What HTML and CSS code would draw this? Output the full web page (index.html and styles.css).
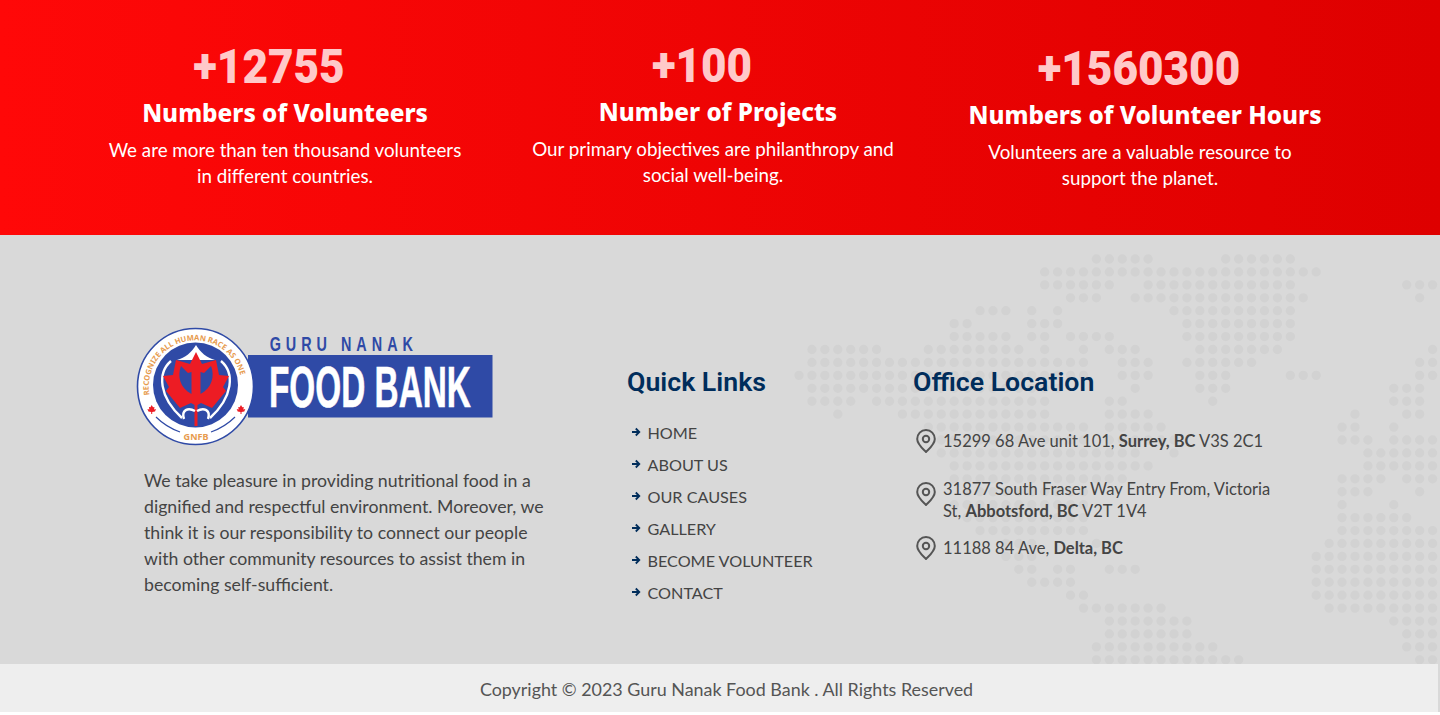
FILE: index.html
```html
<!DOCTYPE html>
<html lang="en">
<head>
  <meta charset="UTF-8" />
  <meta name="viewport" content="width=device-width, initial-scale=1.0"/>
  <title>Guru Nanak Food Bank</title>
  <link rel="stylesheet" href="styles.css">
</head>
<body>
  <!-- STATS -->
  <section class="stats">
    <div class="stat">
      <div class="stat-num">+12755</div>
      <h3>Numbers of Volunteers</h3>
      <p>We are more than ten thousand volunteers<br>in different countries.</p>
    </div>
    <div class="stat stat-mid">
      <div class="stat-num">+100</div>
      <h3>Number of Projects</h3>
      <p>Our primary objectives are philanthropy and<br>social well-being.</p>
    </div>
    <div class="stat stat-last">
      <div class="stat-num">+1560300</div>
      <h3>Numbers of Volunteer Hours</h3>
      <p>Volunteers are a valuable resource to<br>support the planet.</p>
    </div>
  </section>

  <!-- FOOTER -->
  <footer class="footer">
    <svg class="dots" viewBox="0 0 660 429" width="660" height="429" aria-hidden="true">
      <g transform="translate(19 24) scale(12.93)">
        <path d="M23 0h4.01M33 0h5.01M19 1h21.01M19 2h5.01M27 2h11.01M47 2h2.01M21 3h2.01M26 3h13.01M48 3h.01
          M14 4h2.01M18 4h.01M20 4h.01M29 4h9.01M12 5h1.01M18 5h2.01M30 5h8.01M12 6h4.01M18 6h1.01M21 6h3.01M30 6h8.01
          M1 7h5.01M10 7h7.01M19 7h.01M22 7h.01M24 7h2.01M31 7h6.01M49 7h.01M1 8h21.01M25 8h2.01M30 8h5.01M48 8h1.01
          M0 9h22.01M25 9h2.01M31 9h2.01M38 9h2.01M48 9h1.01M1 10h19.01M26 10h.01M31 10h2.01M46 10h2.01
          M1 11h3.01M6 11h13.01M24 11h1.01M32 11h.01M46 11h2.01M3 12h.01M8 12h11.01M24 12h3.01M43 12h.01M47 12h1.01
          M10 13h12.01M24 13h4.01M42 13h1.01M46 13h.01M11 14h11.01M24 14h5.01M42 14h2.01M46 14h3.01
          M11 15h15.01M29 15h.01M44 15h5.01M12 16h15.01M44 16h5.01M12 17h13.01M42 17h3.01M47 17h2.01
          M13 18h9.01M42 18h2.01M48 18h.01M12 19h10.01M42 19h.01M46 19h.01M13 20h9.01M42 20h5.01M14 21h8.01M42 21h7.01
          M16 22h2.01M23 22h.01M41 22h8.01M16 23h2.01M40 23h9.01M17 24h1.01M20 24h1.01M24 24h2.01M40 24h9.01
          M18 25h3.01M40 25h9.01M21 26h1.01M40 26h9.01M22 27h6.01M41 27h8.01M24 28h6.01M46 28h3.01
          M24 29h6.01M47 29h2.01M23 30h9.01M47 30h2.01M23 31h11.01M48 31h1.01"/>
      </g>
    </svg>

    <div class="footer-main">
      <div class="col-about">
        <svg class="logo" viewBox="0 0 360 124" width="360" height="124" role="img" aria-label="Guru Nanak Food Bank">
          <rect class="logo-bar" x="113" y="30" width="244.500" height="62.500"/>
          <text class="logo-guru" transform="scale(.72 1)" x="187" y="26" textLength="199" lengthAdjust="spacing">GURU NANAK</text>
          <text class="logo-food" transform="scale(.575 1)" x="233" y="82">FOOD BANK</text>

          <circle class="logo-ring" cx="60.500" cy="61.500" r="58"/>
          <circle class="logo-blue" cx="60.500" cy="60" r="42.500"/>
          <path class="logo-curve" d="M21 92Q31 102 45 107M100 92Q90 102 76 107"/>
          <!-- white peak and the two outer blades -->
          <path class="logo-white" d="M61 20C57 27 50 33 42 35L80 35C72 33 65 27 61 20Z"/>
          <path class="logo-blade" d="M36 36C22 48 24 72 47 93M86 36C100 48 98 72 75 93"/>
          <path class="logo-red" d="M61 27L67 39L81 35L84 50L94 51L88 62L91 66L77 83L66 78L62.500 80V101H59.500V80L56 78L45 83L31 66L34 62L28 51L38 50L41 35L55 39Z"/>
          <path class="logo-blue" d="M46 41C42 51 45 63 56.500 69V47L53 48ZM76 41C80 51 77 63 65.500 69V47L69 48Z"/>
          <path class="logo-blade" d="M60 86C53 82 46 85 49 94M62 86C69 82 76 85 73 94"/>

          <path id="logoArc" class="logo-none" d="M14.500 70A46.500 46.500 0 1 1 98 89"/>
          <text class="logo-motto"><textPath href="#logoArc">RECOGNIZE ALL HUMAN RACE AS ONE</textPath></text>
          <text class="logo-gnfb" x="61" y="114.500" text-anchor="middle">GNFB</text>
          <path class="logo-leaf" d="M16.700 80L18 82.300L19.500 82L19 84.500L21 84L20 86.500L17.200 87V89H16.200V87L13.400 86.500L12.400 84L14.400 84.500L13.900 82L15.400 82.300Z"/>
          <path class="logo-leaf" d="M106 80L107.300 82.300L108.800 82L108.300 84.500L110.300 84L109.300 86.500L106.500 87V89H105.500V87L102.700 86.500L101.700 84L103.700 84.500L103.200 82L104.700 82.300Z"/>
        </svg>
        <p class="about-text">We take pleasure in providing nutritional food in a<br>dignified and respectful environment. Moreover, we<br>think it is our responsibility to connect our people<br>with other community resources to assist them in<br>becoming self-sufficient.</p>
      </div>

      <div class="col-links">
        <h4>Quick Links</h4>
        <ul class="links">
          <li><svg viewBox="0 0 10 10" width="10" height="10"><path d="M1 5h7M4.800 1.500L8.300 5L4.800 8.500"/></svg><a href="#">HOME</a></li>
          <li><svg viewBox="0 0 10 10" width="10" height="10"><path d="M1 5h7M4.800 1.500L8.300 5L4.800 8.500"/></svg><a href="#">ABOUT US</a></li>
          <li><svg viewBox="0 0 10 10" width="10" height="10"><path d="M1 5h7M4.800 1.500L8.300 5L4.800 8.500"/></svg><a href="#">OUR CAUSES</a></li>
          <li><svg viewBox="0 0 10 10" width="10" height="10"><path d="M1 5h7M4.800 1.500L8.300 5L4.800 8.500"/></svg><a href="#">GALLERY</a></li>
          <li><svg viewBox="0 0 10 10" width="10" height="10"><path d="M1 5h7M4.800 1.500L8.300 5L4.800 8.500"/></svg><a href="#">BECOME VOLUNTEER</a></li>
          <li><svg viewBox="0 0 10 10" width="10" height="10"><path d="M1 5h7M4.800 1.500L8.300 5L4.800 8.500"/></svg><a href="#">CONTACT</a></li>
        </ul>
      </div>

      <div class="col-office">
        <h4>Office Location</h4>
        <div class="office">
          <div class="place">
            <svg viewBox="0 0 20 24" width="20" height="24"><path d="M10 1C5 1 1.200 5 1.200 10C1.200 15 6 19 10 23C14 19 18.800 15 18.800 10C18.800 5 15 1 10 1Z"/><circle cx="10" cy="10" r="3.200"/></svg>
            <span>15299 68 Ave unit 101, <b>Surrey, BC</b> V3S 2C1</span>
          </div>
          <div class="place place-two">
            <svg viewBox="0 0 20 24" width="20" height="24"><path d="M10 1C5 1 1.200 5 1.200 10C1.200 15 6 19 10 23C14 19 18.800 15 18.800 10C18.800 5 15 1 10 1Z"/><circle cx="10" cy="10" r="3.200"/></svg>
            <span>31877 South Fraser Way Entry From, Victoria<br>St, <b>Abbotsford, BC</b> V2T 1V4</span>
          </div>
          <div class="place">
            <svg viewBox="0 0 20 24" width="20" height="24"><path d="M10 1C5 1 1.200 5 1.200 10C1.200 15 6 19 10 23C14 19 18.800 15 18.800 10C18.800 5 15 1 10 1Z"/><circle cx="10" cy="10" r="3.200"/></svg>
            <span>11188 84 Ave, <b>Delta, BC</b></span>
          </div>
        </div>
      </div>
    </div>

    <div class="copyright">Copyright © 2023 Guru Nanak Food Bank . All Rights Reserved</div>
  </footer>
</body>
</html>
```

FILE: styles.css
```css
:root {
  --navy: #002d5b;
  --logo-blue: #2f4aa6;
  --logo-orange: #e79b4e;
  --logo-red: #ed1c24;
  --grey: #d9d9d9;
  --text: #444;
}

* {
  box-sizing: border-box;
}

body {
  margin: 0;
  background: #fff;
  font-family: "Lato", "Noto Sans", sans-serif;
  color: var(--text);
}

/* stats band */
.stats {
  height: 235px;
  display: grid;
  grid-template-columns: repeat(3, 390px);
  column-gap: 40px;
  padding: 0 100px 0 90px;
  background: linear-gradient(90deg, #ff0808, #de0000);
  color: #fff;
  text-align: center;
}

.stat {
  padding-top: 39px;
}

.stat-mid {
  padding-top: 38px;
}

.stat-last {
  padding-top: 41px;
}

.stat-num {
  margin-right: 32px;
  font-family: "Roboto", sans-serif;
  font-size: 49px;
  line-height: 56px;
  font-weight: 900;
  color: #ffc9c9;
  transform: scaleX(.9);
}

.stat-mid .stat-num {
  margin-right: 26px;
}

.stat-last .stat-num {
  margin-right: 12px;
}

.stat h3 {
  margin: 1px 0 0;
  font-family: "Noto Sans", sans-serif;
  font-size: 24.3px;
  line-height: 34px;
  font-weight: 800;
  white-space: nowrap;
}

.stat-mid h3 {
  margin-left: 6px;
}

.stat p {
  margin: 7px 0 0;
  font-size: 18.8px;
  line-height: 26px;
  white-space: nowrap;
}

.stat-mid p {
  margin-right: 4px;
}

.stat-last p {
  margin-right: 10px;
}

/* footer */
.footer {
  position: relative;
  background: var(--grey);
}

.footer::after {
  content: "";
  position: absolute;
  right: 0;
  top: 0;
  bottom: 12px;
  width: 2px;
  background: var(--grey);
}

.dots {
  position: absolute;
  top: 0;
  right: 0;
  overflow: hidden;
}

.dots path {
  fill: none;
  stroke: #d2d2d2;
  stroke-width: .72;
  stroke-linecap: round;
  stroke-dasharray: 0 1;
}

.footer-main {
  position: relative;
  height: 429px;
  display: flex;
  padding-left: 135px;
}

.col-about {
  width: 492px;
  padding-top: 90px;
}

.logo {
  display: block;
}

.logo-bar { fill: var(--logo-blue); }
.logo-guru {
  font: 700 20px "Liberation Sans", sans-serif;
  fill: var(--logo-blue);
}
.logo-food {
  font: 700 58px "Liberation Sans", sans-serif;
  fill: #fff;
  stroke: #fff;
  stroke-width: .6;
}
.logo-ring {
  fill: #fff;
  stroke: var(--logo-blue);
  stroke-width: 1.6;
}
.logo-blue { fill: var(--logo-blue); }
.logo-white { fill: #fff; }
.logo-red, .logo-leaf { fill: var(--logo-red); }
.logo-none { fill: none; }
.logo-curve {
  fill: none;
  stroke: var(--logo-blue);
  stroke-width: 1.2;
}
.logo-blade {
  fill: none;
  stroke: #fff;
  stroke-width: 2.4;
}
.logo-motto {
  font: 700 7.6px "Noto Sans", sans-serif;
  fill: var(--logo-orange);
}
.logo-gnfb {
  font: 700 9px "Noto Sans", sans-serif;
  fill: var(--logo-orange);
}

.about-text {
  margin: 19px 0 0 9px;
  font-size: 17.7px;
  line-height: 26px;
  white-space: nowrap;
}

.col-links {
  width: 286px;
}

.col-links h4, .col-office h4 {
  margin: 0;
  padding-top: 129px;
  font-family: "Roboto", sans-serif;
  font-size: 26.7px;
  line-height: 36px;
  font-weight: 600;
  color: var(--navy);
}

.links {
  list-style: none;
  margin: 16px 0 0;
  padding: 0 0 0 4px;
}

.links li {
  height: 32px;
  display: flex;
  align-items: center;
  gap: 6.500px;
  font-size: 16.2px;
}

.links svg {
  fill: none;
  stroke: var(--navy);
  stroke-width: 1.8;
}

.links a {
  color: var(--text);
  text-decoration: none;
}

.office {
  margin-top: 29px;
  padding-left: 3px;
  display: flex;
  flex-direction: column;
  gap: 13px;
}

.place {
  display: flex;
  align-items: center;
  gap: 7px;
  font-size: 16.5px;
  line-height: 22px;
  white-space: nowrap;
}

.place:first-child {
  margin-bottom: 12px;
}

.place svg {
  flex: none;
  fill: none;
  stroke: #555;
  stroke-width: 2;
}

.place-two {
  align-items: flex-start;
}

.place-two svg {
  margin-top: 4px;
}

.place-two + .place {
  margin-top: 1px;
}

.copyright {
  position: relative;
  width: 1438px;
  height: 48px;
  background: #eee;
  text-align: center;
  font-size: 17.9px;
  line-height: 50px;
  color: #555;
  padding-left: 15px;
}
```
